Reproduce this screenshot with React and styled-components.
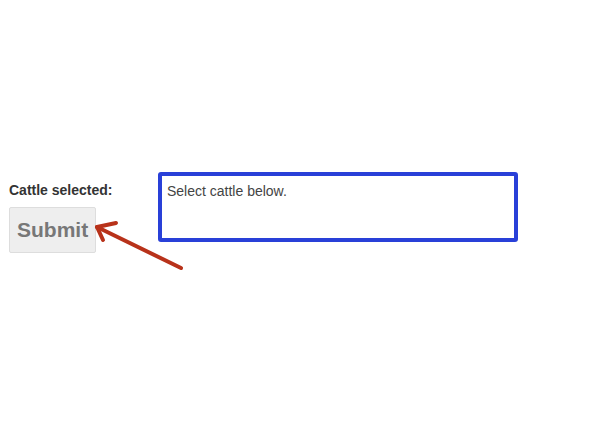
import React from "react";
import styled, { createGlobalStyle } from "styled-components";

const GlobalStyle = createGlobalStyle`
  html, body {
    background: #ffffff;
  }
  body {
    margin: 8px;
    font-family: "Liberation Sans", Arial, sans-serif;
  }
`;

export default function App() {
  return (
    <>
      <GlobalStyle />
      <Page>
        <Row>
          <Side>
            <Label>Cattle selected:</Label>
            <SubmitButton type="button">Submit</SubmitButton>
          </Side>
          <SelectedBox>Select cattle below.</SelectedBox>
          <Arrow width="100" height="56" viewBox="0 0 100 56">
            <path
              d="M92 52 L8 11"
              stroke="#b8321a"
              strokeWidth="4"
              strokeLinecap="round"
              fill="none"
            />
            <path
              d="M27 7 L8 11 L14 24"
              stroke="#b8321a"
              strokeWidth="4"
              strokeLinecap="round"
              strokeLinejoin="round"
              fill="none"
            />
          </Arrow>
        </Row>
      </Page>
    </>
  );
}

const Page = styled.div`
  box-sizing: border-box;
  min-height: 428px;
  padding: 164px 0 0 1px;
`;

const Row = styled.div`
  position: relative;
  display: flex;
  flex-direction: row;
  align-items: flex-start;
`;

const Side = styled.div`
  display: flex;
  flex-direction: column;
  align-items: flex-start;
  width: 149px;
  padding-top: 10px;
  gap: 9px;
`;

const Label = styled.span`
  font-size: 14px;
  line-height: 16px;
  font-weight: bold;
  color: #333333;
`;

const SubmitButton = styled.button`
  box-sizing: border-box;
  width: 87px;
  height: 46px;
  padding: 0 8px 0 7px;
  background: #eeeeee;
  border: 1px solid #dddddd;
  border-radius: 2px;
  font-family: "Liberation Sans", Arial, sans-serif;
  font-size: 21px;
  font-weight: bold;
  color: #777777;
  text-align: left;
`;

const SelectedBox = styled.div`
  box-sizing: border-box;
  width: 360px;
  height: 70px;
  padding: 7px 5px;
  border: 4px solid #2940d8;
  border-radius: 3px;
  font-size: 14px;
  line-height: 16px;
  color: #444444;
`;

const Arrow = styled.svg`
  position: absolute;
  left: 80px;
  top: 44px;
  overflow: visible;
`;
